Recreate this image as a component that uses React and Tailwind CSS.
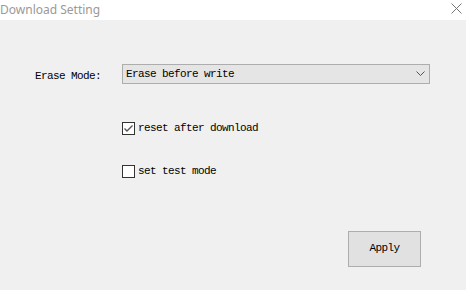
import React, { useState } from 'react';

const mono = { fontFamily: '"Liberation Mono", "DejaVu Sans Mono", monospace' };

const CheckRow = ({ checked, onToggle, label }) => (
  <div className="flex items-center cursor-default" onClick={onToggle}>
    <div className="w-[13px] h-[13px] border border-[#333] bg-white flex items-center justify-center">
      {checked && (
        <svg width="11" height="11" viewBox="0 0 11 11">
          <path d="M1.5 5.5 L4 8 L9.5 2.5" fill="none" stroke="#555" strokeWidth="1.4" />
        </svg>
      )}
    </div>
    <span className="ml-[3px] text-[11px] tracking-[-0.6px] text-black leading-none">{label}</span>
  </div>
);

const App = () => {
  const [reset, setReset] = useState(true);
  const [test, setTest] = useState(false);

  return (
    <div className="w-[466px] h-[290px] flex flex-col bg-[#f0f0f0] overflow-hidden" style={mono}>
      <div className="h-[20px] bg-white flex items-center justify-between">
        <span className="text-[12px] text-[#999] leading-none" style={{ fontFamily: '"Noto Sans", sans-serif' }}>
          Download Setting
        </span>
        <svg width="11" height="11" viewBox="0 0 11 11" className="mr-[4px] mb-[3px]">
          <path d="M0.5 0.5 L10.5 10.5 M10.5 0.5 L0.5 10.5" stroke="#777" strokeWidth="1" />
        </svg>
      </div>

      <div className="flex flex-col">
        <div className="flex items-start mt-[44px]">
          <span className="ml-[35px] mt-[4px] w-[87px] text-[11px] tracking-[-0.6px] text-black">Erase Mode:</span>
          <div className="w-[308px] h-[20px] border border-[#adadad] bg-[#e5e5e5] flex items-center justify-between pl-[3px] pr-[4px]">
            <span className="text-[11px] tracking-[-0.6px] text-black">Erase before write</span>
            <svg width="9" height="6" viewBox="0 0 9 6">
              <path d="M0.5 0.5 L4.5 4.5 L8.5 0.5" fill="none" stroke="#555" strokeWidth="1" />
            </svg>
          </div>
        </div>

        <div className="ml-[122px] mt-[37px]">
          <CheckRow checked={reset} onToggle={() => setReset(!reset)} label="reset after download" />
        </div>
        <div className="ml-[122px] mt-[30px]">
          <CheckRow checked={test} onToggle={() => setTest(!test)} label="set test mode" />
        </div>

        <div className="ml-[348px] mt-[53px]">
          <button className="w-[73px] h-[36px] border border-[#adadad] bg-[#e1e1e1] text-[11px] tracking-[-0.6px] text-black">
            Apply
          </button>
        </div>
      </div>
    </div>
  );
};

export default App;
